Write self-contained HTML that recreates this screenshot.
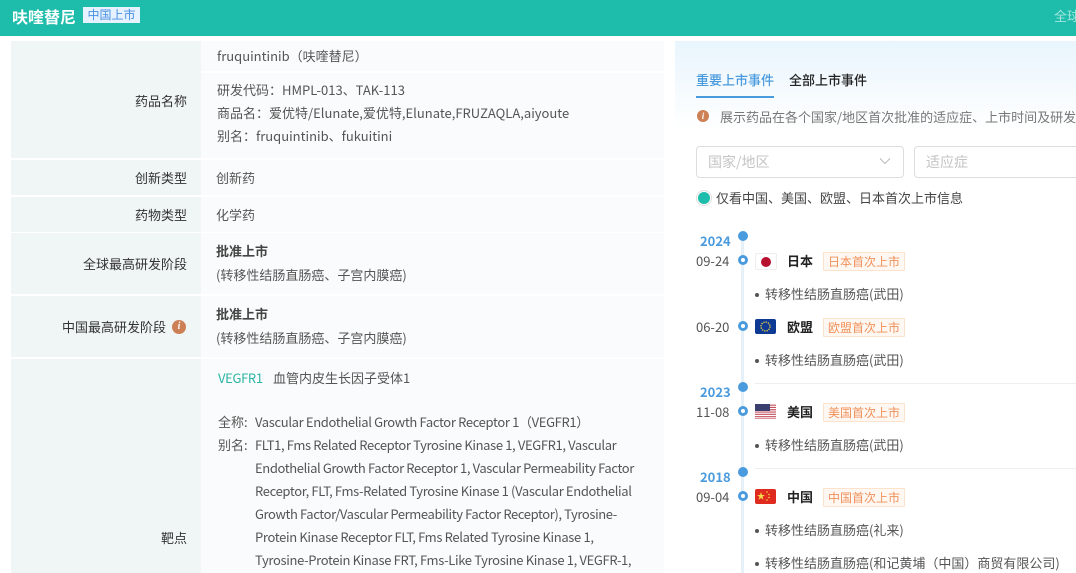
<!DOCTYPE html>
<html lang="zh"><head><meta charset="utf-8"><style>
html,body{margin:0;padding:0;width:1076px;height:573px;overflow:hidden;background:#fff}
body{position:relative;font:13px/20px "Noto Sans CJK SC","Liberation Sans",sans-serif;color:#555}
.a{position:absolute;white-space:nowrap}
.n{letter-spacing:-.34px}
.b{position:absolute;background:#f0f6f6}
.v{position:absolute;background:#fafbfc}
.l{position:absolute;white-space:nowrap;right:889px;color:#333}
.bd{font-weight:700;color:#444}
.dot{position:absolute;width:10px;height:10px;border-radius:50%;background:#4a9ade;left:738px}
.ring{position:absolute;width:4px;height:4px;border-radius:50%;border:3px solid #4a9ade;background:#fff;left:738px}
.yr{position:absolute;left:700px;color:#4a9ade;font-weight:700;font-size:13px;white-space:nowrap}
.dt{position:absolute;left:696px;color:#555;white-space:nowrap}
.nm{position:absolute;left:787px;font-weight:700;color:#222;white-space:nowrap}
.tg{position:absolute;left:823px;width:82px;height:19px;box-sizing:border-box;border:1px solid #fde3cc;background:#fff8f2;color:#f0905a;font-size:12px;line-height:17px;text-align:center;white-space:nowrap;border-radius:1px}
.li{position:absolute;left:755px;color:#555;white-space:nowrap}
.li:before{content:"";display:inline-block;width:4px;height:4px;border-radius:50%;background:#555;margin-right:6px;vertical-align:2px}
.hr{position:absolute;left:755px;right:0;height:1px;background:#eee}
.fl{position:absolute;left:755px;width:21px;height:15px;border-radius:2px;overflow:hidden}
</style></head><body>
<div style="position:absolute;left:0;top:0;width:1076px;height:36px;background:#1dbcab"></div>
<div class="a" style="left:12px;top:4px;font-size:16px;font-weight:700;color:#fff;line-height:24px">呋喹替尼</div>
<div class="a" style="left:83px;top:7px;width:57px;height:16px;background:#e6f2ff;color:#4a90e2;font-size:12px;line-height:16px;text-align:center">中国上市</div>
<div class="a" style="left:1054px;top:6px;color:#a5e6de;font-size:13px">全球</div>

<div class="b" style="left:11px;top:41px;width:190px;height:117px"></div>
<div class="b" style="left:11px;top:160px;width:190px;height:35px"></div>
<div class="b" style="left:11px;top:197px;width:190px;height:35px"></div>
<div class="b" style="left:11px;top:233px;width:190px;height:61px"></div>
<div class="b" style="left:11px;top:296px;width:190px;height:61px"></div>
<div class="b" style="left:11px;top:359px;width:190px;height:214px"></div>
<div class="v" style="left:201px;top:41px;width:463px;height:30px"></div>
<div class="v" style="left:201px;top:73px;width:463px;height:85px"></div>
<div class="v" style="left:201px;top:160px;width:463px;height:35px"></div>
<div class="v" style="left:201px;top:197px;width:463px;height:35px"></div>
<div class="v" style="left:201px;top:233px;width:463px;height:61px"></div>
<div class="v" style="left:201px;top:296px;width:463px;height:61px"></div>
<div class="v" style="left:201px;top:359px;width:463px;height:214px"></div>

<div class="l" style="top:91px">药品名称</div>
<div class="l" style="top:168px">创新类型</div>
<div class="l" style="top:205px">药物类型</div>
<div class="l" style="top:254px">全球最高研发阶段</div>
<div class="l" style="top:317px;right:910px">中国最高研发阶段</div>
<div class="a" style="left:172px;top:320px;width:14px;height:14px;border-radius:50%;background:#cd7f55;color:#fff;font:italic 700 10px/14px 'Liberation Serif',serif;text-align:center">i</div>
<div class="l" style="top:528px">靶点</div>

<div class="a" style="left:217px;top:46px">fruquintinib（呋喹替尼）</div>
<div class="a" style="left:217px;top:80px">研发代码：HMPL-013、TAK-113</div>
<div class="a" style="left:217px;top:103px">商品名：爱优特/Elunate,爱优特,Elunate,FRUZAQLA,aiyoute</div>
<div class="a" style="left:217px;top:126px">别名：fruquintinib、fukuitini</div>
<div class="a" style="left:216px;top:168px">创新药</div>
<div class="a" style="left:216px;top:205px">化学药</div>
<div class="a bd" style="left:216px;top:241px">批准上市</div>
<div class="a" style="left:216px;top:265px">(转移性结肠直肠癌、子宫内膜癌)</div>
<div class="a bd" style="left:216px;top:304px">批准上市</div>
<div class="a" style="left:216px;top:328px">(转移性结肠直肠癌、子宫内膜癌)</div>
<div class="a n" style="left:218px;top:368px;color:#2bb5a5">VEGFR1</div>
<div class="a" style="left:273px;top:368px">血管内皮生长因子受体1</div>
<div class="a" style="left:218px;top:412px">全称:</div>
<div class="a" style="left:255px;top:412px;letter-spacing:-.35px">Vascular Endothelial Growth Factor Receptor 1（VEGFR1）</div>
<div class="a" style="left:218px;top:435px">别名:</div>
<div class="a" style="left:255px;top:435px;letter-spacing:-.37px">FLT1, Fms Related Receptor Tyrosine Kinase 1, VEGFR1, Vascular</div>
<div class="a" style="left:255px;top:458px;letter-spacing:-.385px">Endothelial Growth Factor Receptor 1, Vascular Permeability Factor</div>
<div class="a" style="left:255px;top:481px;letter-spacing:-.355px">Receptor, FLT, Fms-Related Tyrosine Kinase 1 (Vascular Endothelial</div>
<div class="a" style="left:255px;top:504px;letter-spacing:-.4px">Growth Factor/Vascular Permeability Factor Receptor), Tyrosine-</div>
<div class="a n" style="left:255px;top:527px">Protein Kinase Receptor FLT, Fms Related Tyrosine Kinase 1,</div>
<div class="a n" style="left:255px;top:550px">Tyrosine-Protein Kinase FRT, Fms-Like Tyrosine Kinase 1, VEGFR-1,</div>

<div style="position:absolute;left:675px;top:41px;width:401px;height:90px;background:linear-gradient(#e9f5fd,#fff)"></div>
<div class="a" style="left:696px;top:70px;color:#4a9ade;font-weight:500">重要上市事件</div>
<div class="a" style="left:789px;top:70px;color:#222;font-weight:500">全部上市事件</div>
<div style="position:absolute;left:696px;top:96px;width:78px;height:2px;background:#4a9ade"></div>
<div class="a" style="left:697px;top:110px;width:12px;height:12px;border-radius:50%;background:#cd7f55;color:#fff;font:italic 700 9px/12px 'Liberation Serif',serif;text-align:center">i</div>
<div class="a" style="left:720px;top:107px;color:#777">展示药品在各个国家/地区首次批准的适应症、上市时间及研发</div>
<div style="position:absolute;left:696px;top:146px;width:208px;height:32px;box-sizing:border-box;border:1px solid #ddd;border-radius:4px;background:#fff"></div>
<div style="position:absolute;left:914px;top:146px;width:170px;height:32px;box-sizing:border-box;border:1px solid #ddd;border-radius:4px;background:#fff"></div>
<div class="a" style="left:708px;top:152px;color:#c4c4c4;font-size:14px">国家/地区</div>
<div class="a" style="left:926px;top:152px;color:#c4c4c4;font-size:14px">适应症</div>
<svg style="position:absolute;left:879px;top:157px" width="12" height="8" viewBox="0 0 12 8"><path d="M1 1.500 6 6.500 11 1.500" fill="none" stroke="#bbb"/></svg>
<div style="position:absolute;left:696px;top:190px;width:16px;height:16px;box-sizing:border-box;border:1px solid #ddd;border-radius:50%;background:#fff"></div>
<div style="position:absolute;left:698px;top:192px;width:12px;height:12px;border-radius:50%;background:#1dbcab"></div>
<div class="a" style="left:716px;top:188px;color:#444">仅看中国、美国、欧盟、日本首次上市信息</div>

<div style="position:absolute;left:741px;top:236px;width:3px;height:337px;background:#e6f0f8"></div>
<div class="dot" style="top:231px"></div>
<div class="yr" style="top:231px">2024</div>
<div class="dt" style="top:251px">09-24</div>
<div class="ring" style="top:255px"></div>
<div class="fl" style="top:253px;width:22px;height:17px;background:#fff;border:1px solid #eee;box-sizing:border-box"><div style="position:absolute;left:5px;top:2.500px;width:10px;height:10px;border-radius:50%;background:#b8102f"></div></div>
<div class="nm" style="top:251px">日本</div>
<div class="tg" style="top:252px">日本首次上市</div>
<div class="li" style="top:284px">转移性结肠直肠癌(武田)</div>

<div class="dt" style="top:317px">06-20</div>
<div class="ring" style="top:321px"></div>
<div class="fl" style="top:319px;background:#0f3a94"><svg width="21" height="15"><circle cx="10.500" cy="7.500" r="4.500" fill="none" stroke="#f5d63d" stroke-width="1.300" stroke-dasharray="1.300 1.060"/></svg></div>
<div class="nm" style="top:317px">欧盟</div>
<div class="tg" style="top:318px">欧盟首次上市</div>
<div class="li" style="top:350px">转移性结肠直肠癌(武田)</div>

<div class="hr" style="top:383px"></div>
<div class="dot" style="top:382px"></div>
<div class="yr" style="top:382px">2023</div>
<div class="dt" style="top:402px">11-08</div>
<div class="ring" style="top:406px"></div>
<svg class="fl" style="top:404px;border-radius:0" width="21" height="15" viewBox="0 0 21 15"><rect width="21" height="15" fill="#fff"/><path d="M0 1.150H21M0 3.450H21M0 5.750H21M0 8.050H21M0 10.350H21M0 12.650H21M0 14.950H21" stroke="#c4515f" stroke-width="1.150"/><rect width="15" height="7" fill="#3a3f6e"/></svg>
<div class="nm" style="top:402px">美国</div>
<div class="tg" style="top:403px">美国首次上市</div>
<div class="li" style="top:435px">转移性结肠直肠癌(武田)</div>

<div class="hr" style="top:468px"></div>
<div class="dot" style="top:467px"></div>
<div class="yr" style="top:467px">2018</div>
<div class="dt" style="top:487px">09-04</div>
<div class="ring" style="top:491px"></div>
<div class="fl" style="top:489px;background:#de2a1f"><svg width="21" height="15"><path d="M6 3 7 6 10 6 7.500 7.800 8.500 10.800 6 9 3.500 10.800 4.500 7.800 2 6 5 6Z" fill="#f7d84a"/><circle cx="12" cy="3" r=".8" fill="#f7d84a"/><circle cx="14" cy="5.500" r=".8" fill="#f7d84a"/><circle cx="14" cy="8.500" r=".8" fill="#f7d84a"/><circle cx="12" cy="11" r=".8" fill="#f7d84a"/></svg></div>
<div class="nm" style="top:487px">中国</div>
<div class="tg" style="top:488px">中国首次上市</div>
<div class="li" style="top:520px">转移性结肠直肠癌(礼来)</div>
<div class="li" style="top:553px">转移性结肠直肠癌(和记黄埔（中国）商贸有限公司)</div>
</body></html>
